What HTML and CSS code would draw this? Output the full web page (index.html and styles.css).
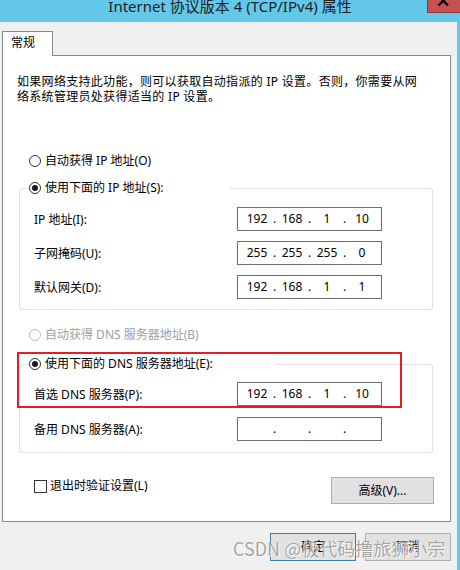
FILE: index.html
```html
<!DOCTYPE html>
<html lang="zh-CN">
<head>
<meta charset="utf-8">
<title>Internet 协议版本 4 (TCP/IPv4) 属性</title>
<link rel="stylesheet" href="styles.css">
</head>
<body>
<div class="titlebar">
  <div class="title">Internet 协议版本 4 (TCP/IPv4) 属性</div>
  <div class="close">
    <svg width="33" height="13" viewBox="0 0 33 13"><path d="M11.5 -4 L21 5.5 M21 -4 L11.5 5.5" stroke="#000" stroke-width="2.2" fill="none"/></svg>
  </div>
</div>
<div class="main">
  <div class="tabs"><div class="tab">常规</div></div>
  <div class="panel">
    <div class="desc">
      <div class="desc-line">如果网络支持此功能，则可以获取自动指派的 IP 设置。否则，你需要从网</div>
      <div class="desc-line">络系统管理员处获得适当的 IP 设置。</div>
    </div>

    <div class="radio radio-ip-auto"><span class="circle"></span>自动获得 IP 地址(O)</div>

    <fieldset class="group group-ip">
      <legend class="radio legend-ip"><span class="circle on"></span>使用下面的 IP 地址(S):</legend>
      <div class="row row-first-ip"><span class="lbl">IP 地址(I):</span>
        <div class="ip"><span class="seg">192</span><span class="dot">.</span><span class="seg">168</span><span class="dot">.</span><span class="seg">1</span><span class="dot">.</span><span class="seg">10</span></div></div>
      <div class="row row-ip"><span class="lbl">子网掩码(U):</span>
        <div class="ip"><span class="seg">255</span><span class="dot">.</span><span class="seg">255</span><span class="dot">.</span><span class="seg">255</span><span class="dot">.</span><span class="seg">0</span></div></div>
      <div class="row row-ip"><span class="lbl">默认网关(D):</span>
        <div class="ip"><span class="seg">192</span><span class="dot">.</span><span class="seg">168</span><span class="dot">.</span><span class="seg">1</span><span class="dot">.</span><span class="seg">1</span></div></div>
    </fieldset>

    <div class="radio disabled radio-dns-auto"><span class="circle"></span>自动获得 DNS 服务器地址(B)</div>

    <fieldset class="group group-dns">
      <legend class="radio legend-dns"><span class="circle on"></span>使用下面的 DNS 服务器地址(E):</legend>
      <div class="row row-first-dns"><span class="lbl">首选 DNS 服务器(P):</span>
        <div class="ip"><span class="seg">192</span><span class="dot">.</span><span class="seg">168</span><span class="dot">.</span><span class="seg">1</span><span class="dot">.</span><span class="seg">10</span></div></div>
      <div class="row row-dns"><span class="lbl">备用 DNS 服务器(A):</span>
        <div class="ip"><span class="seg"></span><span class="dot">.</span><span class="seg"></span><span class="dot">.</span><span class="seg"></span><span class="dot">.</span><span class="seg"></span></div></div>
    </fieldset>

    <div class="panel-foot">
      <div class="check"><span class="box"></span>退出时验证设置(L)</div>
      <div class="btn btn-adv">高级(V)...</div>
    </div>
  </div>
  <div class="buttons">
    <div class="btn btn-main default">确定</div>
    <div class="btn btn-main">取消</div>
  </div>
</div>
<div class="highlight"></div>
<div class="watermark">CSDN @极代码撸旅狮小宗</div>
</body>
</html>
```
FILE: styles.css
```css
html, body {
  margin: 0;
  padding: 0;
}
body {
  width: 460px;
  height: 570px;
  overflow: hidden;
  background: #f0f0f0;
  font-family: "Noto Sans", "Noto Sans CJK SC", sans-serif;
  font-size: 12px;
  color: #000;
  position: relative;
}
.titlebar {
  height: 22px;
  background: #63c8ea;
  display: grid;
  grid-template-columns: 1fr auto 1fr;
  align-items: start;
}
.title {
  grid-column: 2;
  font-size: 15px;
  line-height: 16px;
  margin-top: -2px;
  color: #1e1e1e;
  white-space: nowrap;
}
.close {
  grid-column: 3;
  justify-self: end;
  width: 33px;
  height: 13px;
  box-sizing: border-box;
  background: #c75050;
  border-left: 1px solid #8a3c3c;
  border-bottom: 1px solid #8a3c3c;
  overflow: hidden;
}
.close svg { display: block; margin-left: -1px; }
.main {
  height: 548px;
  box-sizing: border-box;
  border-right: 3px solid #63c8ea;
  padding: 9px 6px 0 2px;
}
.tabs { display: flex; }
.tab {
  width: 51px;
  height: 25px;
  box-sizing: border-box;
  border: 1px solid #898989;
  border-bottom: 0;
  background: #fff;
  margin-bottom: -1px;
  position: relative;
  z-index: 1;
  padding-left: 8px;
  line-height: 21px;
}
.panel {
  height: 467px;
  box-sizing: border-box;
  border: 1px solid #898989;
  background: #fff;
  padding: 18px 0 0 14px;
}
.desc {
  line-height: 15px;
  white-space: nowrap;
  letter-spacing: 0.3px;
}
.radio {
  display: flex;
  align-items: center;
  gap: 4px;
  height: 16px;
  line-height: 16px;
  white-space: nowrap;
}
.circle {
  width: 12px;
  height: 12px;
  box-sizing: border-box;
  border: 1px solid #333;
  border-radius: 50%;
  background: #fff;
  display: flex;
  align-items: center;
  justify-content: center;
  flex: none;
}
.circle.on::after {
  content: "";
  width: 6px;
  height: 6px;
  border-radius: 50%;
  background: #1a1a1a;
}
.radio.disabled { color: #a0a0a0; }
.radio.disabled .circle { border-color: #bcbcbc; }
.radio-ip-auto { margin: 49px 0 0 12px; }
.radio-dns-auto { margin: 17px 0 0 12px; }
.group {
  width: 414px;
  box-sizing: border-box;
  margin: 11px 0 0 2px;
  border: 1px solid #dcdfe6;
  border-radius: 3px;
  padding: 0 0 10px 14px;
  min-width: 0;
}
.group-dns { margin-top: 13px; padding-bottom: 11px; }
.group legend {
  padding: 0;
  margin-left: -5px;
  background: #fff;
}
.legend-ip { width: 201px; }
.legend-dns { width: 247px; }
.row {
  display: flex;
  align-items: center;
  height: 24px;
  white-space: nowrap;
}
.row-first-ip { margin-top: 11px; }
.row-ip { margin-top: 10px; }
.row-first-dns { margin-top: 10px; }
.row-dns { margin-top: 11px; }
.lbl { width: 203px; flex: none; }
.ip {
  width: 145px;
  height: 24px;
  box-sizing: border-box;
  border: 1px solid #6d6d6d;
  background: #fff;
  display: flex;
  align-items: center;
  padding-left: 5px;
  line-height: 16px;
}
.seg { width: 28px; text-align: center; }
.dot { width: 7px; text-align: center; }
.panel-foot {
  width: 400px;
  margin: 24px 0 0 17px;
  display: flex;
  justify-content: space-between;
  align-items: flex-start;
}
.check {
  display: flex;
  align-items: center;
  gap: 3px;
  height: 16px;
  line-height: 16px;
  margin-top: 1px;
  white-space: nowrap;
}
.box {
  width: 13px;
  height: 13px;
  box-sizing: border-box;
  border: 1px solid #333;
  background: #fff;
}
.btn {
  box-sizing: border-box;
  background: #e1e1e1;
  border: 1px solid #adadad;
  display: flex;
  align-items: center;
  justify-content: center;
  line-height: 16px;
}
.btn-adv { width: 103px; height: 27px; }
.buttons {
  margin-top: 11px;
  display: flex;
  justify-content: flex-end;
  gap: 9px;
}
.btn-main { width: 86px; height: 28px; }
.btn-main.default { border-color: #3c7fb1; }
.highlight {
  position: absolute;
  left: 17px;
  top: 352px;
  width: 385px;
  height: 56px;
  box-sizing: border-box;
  border: 2px solid #e31e24;
}
.watermark {
  position: absolute;
  left: 233px;
  top: 536px;
  font-family: "Noto Sans CJK SC", sans-serif;
  font-size: 18px;
  line-height: 24px;
  color: rgba(125, 125, 125, 0.7);
  text-shadow: 0 0 1px #fff, 1px 1px 0 rgba(255,255,255,0.8);
  white-space: nowrap;
}
```
